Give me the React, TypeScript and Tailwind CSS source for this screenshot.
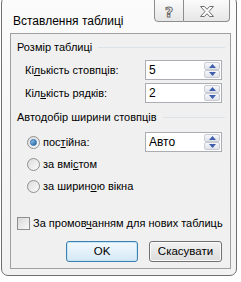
import React from 'react';

function Spinner() {
  return (
    <div className="flex flex-col py-[1px] pr-[1px] h-full">
      <div className="flex-1 w-[16px] border border-[#c9ccd3] rounded-[2px] bg-gradient-to-b from-[#f6f7f9] to-[#dfe3ea] flex items-center justify-center">
        <svg width="7" height="4" viewBox="0 0 7 4"><path d="M0 4 L3.5 0 L7 4 Z" fill="#3f5fae" /></svg>
      </div>
      <div className="flex-1 w-[16px] border border-[#c9ccd3] rounded-[2px] bg-gradient-to-b from-[#f6f7f9] to-[#dfe3ea] flex items-center justify-center">
        <svg width="7" height="4" viewBox="0 0 7 4"><path d="M0 0 L3.5 4 L7 0 Z" fill="#3f5fae" /></svg>
      </div>
    </div>
  );
}

function SpinBox({ value }: { value: string }) {
  return (
    <div className="w-[77px] h-[20px] border border-[#abadb3] bg-white flex items-stretch">
      <span className="flex-1 pl-[3px] leading-[18px] text-[12px]">{value}</span>
      <Spinner />
    </div>
  );
}

function Radio({ checked }: { checked?: boolean }) {
  return (
    <div className="w-[13px] h-[13px] rounded-full border border-[#8f8f8f] bg-gradient-to-br from-[#dcdcdc] to-[#fbfbfb] flex items-center justify-center shrink-0">
      {checked && (
        <div className="w-[7px] h-[7px] rounded-full bg-gradient-to-br from-[#9ad0f5] to-[#1f5f9c] border border-[#2b6db3]" />
      )}
    </div>
  );
}

function Heading({ children }: { children: React.ReactNode }) {
  return (
    <div className="flex items-center gap-[6px] pl-[6px] pr-[5px]">
      <span className="leading-[15px] whitespace-nowrap">{children}</span>
      <div className="flex-1 h-px bg-[#dbe2e8]" />
    </div>
  );
}

export default function App() {
  return (
    <div className="w-[241px] h-[282px] bg-white overflow-hidden text-[11px] text-black font-['Liberation_Sans',Arial,sans-serif]">
      <div className="mt-[-4px] ml-[1px] w-[236px] h-[280px] border border-[#707070] rounded-[7px] bg-gradient-to-b from-[#fbfbfb] to-[#f2f2f2] flex flex-col pl-[8px] pr-[5px] pb-[6px]">
        {/* Title bar */}
        <div className="h-[36px] flex items-start shrink-0">
          <span className="pl-[3px] mt-[17px] leading-[15px] flex-1 text-[12px]">Вставлення таблиці</span>
          <div className="flex mr-[1px]">
            <div className="w-[30px] h-[25px] border border-[#8d8d8d] rounded-bl-[4px] bg-gradient-to-b from-[#fdfdfd] to-[#e6e6e6] flex items-center justify-center pt-[4px]">
              <span className="font-bold text-[14px] leading-none text-[#fafafa] [-webkit-text-stroke:1px_#6e6e6e] font-['DejaVu_Sans',sans-serif]">?</span>
            </div>
            <div className="w-[46px] h-[25px] border border-l-0 border-[#8d8d8d] rounded-br-[4px] bg-gradient-to-b from-[#fdfdfd] to-[#e6e6e6] flex items-center justify-center pt-[4px]">
              <svg width="14" height="11" viewBox="0 0 14 11">
                <path d="M0.5 0.5 H4.5 L7 3.3 L9.5 0.5 H13.5 L9 5.5 L13.5 10.5 H9.5 L7 7.7 L4.5 10.5 H0.5 L5 5.5 Z" fill="#fbfbfb" stroke="#707070" strokeWidth="1" strokeLinejoin="round" />
              </svg>
            </div>
          </div>
        </div>

        {/* Client area */}
        <div className="flex-1 border border-[#a0a0a0] bg-[#f0f0f0] flex flex-col">
          <div className="h-[26px] flex items-center">
            <div className="w-full"><Heading>Розмір таблиці</Heading></div>
          </div>
          <div className="h-[20px] flex items-center justify-between pl-[14px] pr-[8px]">
            <span>Кі<u>л</u>ькість стовпців:</span>
            <SpinBox value="5" />
          </div>
          <div className="h-[20px] mt-[3px] flex items-center justify-between pl-[14px] pr-[8px]">
            <span>Кіл<u>ь</u>кість рядків:</span>
            <SpinBox value="2" />
          </div>
          <div className="h-[28px] flex items-center">
            <div className="w-full"><Heading>Автодобір ширини стовпців</Heading></div>
          </div>
          <div className="h-[22px] flex items-center justify-between pl-[16px] pr-[8px]">
            <div className="flex items-center gap-[3px]">
              <Radio checked />
              <span>пос<u>т</u>ійна:</span>
            </div>
            <SpinBox value="Авто" />
          </div>
          <div className="h-[22px] flex items-center gap-[3px] pl-[16px]">
            <Radio />
            <span>за вмі<u>с</u>том</span>
          </div>
          <div className="h-[22px] flex items-center gap-[3px] pl-[16px]">
            <Radio />
            <span>за ширин<u>о</u>ю вікна</span>
          </div>
          <div className="h-[18px] mt-[17px] flex items-center gap-[3px] pl-[6px]">
            <div className="w-[13px] h-[13px] border border-[#8f8f8f] bg-gradient-to-br from-[#d8d8d8] to-[#fafafa] shrink-0" />
            <span className="whitespace-nowrap">За промов<u>ч</u>анням для нових таблиць</span>
          </div>
          <div className="mt-[9px] flex justify-end gap-[11px] pr-[8px]">
            <button className="w-[72px] h-[21px] rounded-[3px] border border-[#3c7fb1] bg-gradient-to-b from-[#f2f9fd] to-[#d5e8f5] shadow-[inset_0_0_0_1px_#c4e5f6] text-[11.5px]">OK</button>
            <button className="w-[73px] h-[21px] rounded-[3px] border border-[#707070] bg-gradient-to-b from-[#f2f2f2] to-[#dcdcdc] shadow-[inset_0_0_0_1px_#fbfbfb] text-[11.5px]">Скасувати</button>
          </div>
        </div>
      </div>
    </div>
  );
}
